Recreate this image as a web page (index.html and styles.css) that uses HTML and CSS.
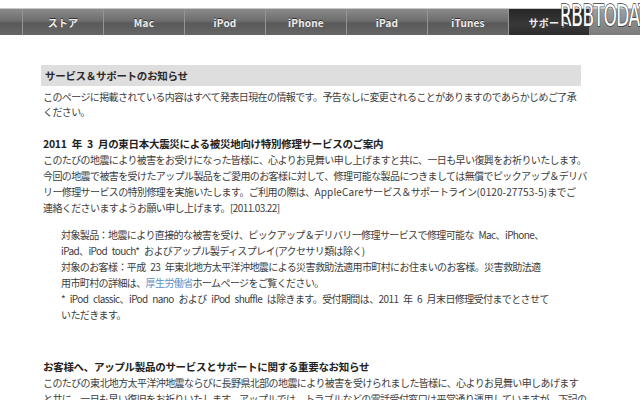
FILE: index.html
```html
<!DOCTYPE html>
<html lang="ja">
<head>
<meta charset="utf-8">
<title>サービス＆サポートのお知らせ</title>
<link rel="stylesheet" href="styles.css">
</head>
<body>
<div class="top">
  <nav class="nav">
    <div class="nav-lead"></div>
    <a class="tab">ストア</a>
    <a class="tab">Mac</a>
    <a class="tab">iPod</a>
    <a class="tab">iPhone</a>
    <a class="tab">iPad</a>
    <a class="tab">iTunes</a>
    <a class="tab tab-active">サポート</a>
    <div class="nav-tail"></div>
  </nav>
  <div class="watermark">RBBTODAY</div>
</div>
<main class="main">
  <h1 class="bar">サービス＆サポートのお知らせ</h1>
  <p class="text intro">このページに掲載されている内容はすべて発表日現在の情報です。予告なしに変更されることがありますのであらかじめご了承<br>ください。</p>

  <h2 class="head">2011 年 3 月の東日本大震災による被災地向け特別修理サービスのご案内</h2>
  <p class="text">このたびの地震により被害をお受けになった皆様に、心よりお見舞い申し上げますと共に、一日も早い復興をお祈りいたします。<br>今回の地震で被害を受けたアップル製品をご愛用のお客様に対して、修理可能な製品につきましては無償でピックアップ＆デリバ<br>リー修理サービスの特別修理を実施いたします。ご利用の際は、<span class="lat">AppleCare</span>サービス＆サポートライン<span class="lat">(0120-27753-5)</span>までご<br>連絡くださいますようお願い申し上げます。[2011.03.22]</p>

  <p class="text indent">対象製品：地震により直接的な被害を受け、ピックアップ＆デリバリー修理サービスで修理可能な Mac、iPhone、<br>iPad、iPod touch* およびアップル製ディスプレイ(アクセサリ類は除く)<br>対象のお客様：平成 23 年東北地方太平洋沖地震による災害救助法適用市町村にお住まいのお客様。災害救助法適<br>用市町村の詳細は、<a class="link">厚生労働省</a>ホームページをご覧ください。<br>* iPod classic、iPod nano および iPod shuffle は除きます。受付期間は、2011 年 6 月末日修理受付までとさせて<br>いただきます。</p>

  <h2 class="head head2">お客様へ、アップル製品のサービスとサポートに関する重要なお知らせ</h2>
  <p class="text">このたびの東北地方太平洋沖地震ならびに長野県北部の地震により被害を受けられました皆様に、心よりお見舞い申しあげます<br>と共に、一日も早い復旧をお祈りいたします。アップルでは、トラブルなどの電話受付窓口は平常通り運用していますが、下記の</p>
</main>
</body>
</html>
```

FILE: styles.css
```css
html, body {
  margin: 0;
  padding: 0;
  background: #ffffff;
}
body {
  width: 640px;
  height: 400px;
  overflow: hidden;
  font-family: "Noto Sans CJK JP", "Noto Sans", sans-serif;
  color: #3c3c3c;
}
.top {
  position: relative;
  padding-top: 8px;
}
.nav {
  display: flex;
  height: 27px;
  background: linear-gradient(#8a8a8a 0%, #6e6e6e 45%, #5a5a5a 55%, #666666 100%);
  border-top: 1px solid #c8c8c8;
  box-sizing: border-box;
}
.nav-lead {
  width: 22px;
  border-right: 1px solid #959595;
}
.tab {
  width: 80px;
  border-right: 1px solid #959595;
  display: flex;
  align-items: center;
  justify-content: center;
  font-size: 10px;
  font-weight: bold;
  color: #eeeeee;
  text-shadow: 0 -1px 0 #333;
  letter-spacing: 0.2px;
}
.tab-active {
  background: linear-gradient(#262626, #383838 60%, #2c2c2c);
  border-right: none;
}
.nav-tail {
  flex: 1;
  background: linear-gradient(#a0a0a0, #8a8a8a 50%, #7c7c7c);
}
.watermark {
  position: absolute;
  left: 560px;
  top: -3px;
  font-family: "DejaVu Sans", sans-serif;
  font-weight: normal;
  font-size: 31px;
  letter-spacing: -1px;
  transform: scaleX(0.55);
  transform-origin: left top;
  color: #ffffff;
  -webkit-text-stroke: 1.6px #3a3a3a;
  paint-order: stroke fill;
  white-space: nowrap;
}
.main {
  padding-left: 41px;
  width: 540px;
  margin-top: 30px;
}
.bar {
  margin: 0;
  height: 21px;
  background: #dedede;
  font-size: 10.5px;
  font-weight: bold;
  color: #2a2a2a;
  line-height: 21px;
  padding-left: 4px;
  letter-spacing: -0.3px;
}
.text {
  margin: 0;
  font-size: 10px;
  letter-spacing: -0.6px;
  word-spacing: 3px;
  line-height: 16px;
  white-space: nowrap;
  padding-left: 2px;
}
.lat {
  letter-spacing: 0.1px;
}
.intro {
  margin-top: 3px;
  line-height: 15px;
}
.head {
  margin: 17px 0 0 0;
  font-size: 10.5px;
  font-weight: bold;
  color: #222;
  line-height: 16px;
  padding-left: 2px;
  letter-spacing: -0.3px;
  word-spacing: 3px;
}
.indent {
  padding-left: 20px;
  margin-top: 11px;
}
.link {
  color: #5a8fc8;
}
.head2 {
  margin-top: 36px;
}
```
